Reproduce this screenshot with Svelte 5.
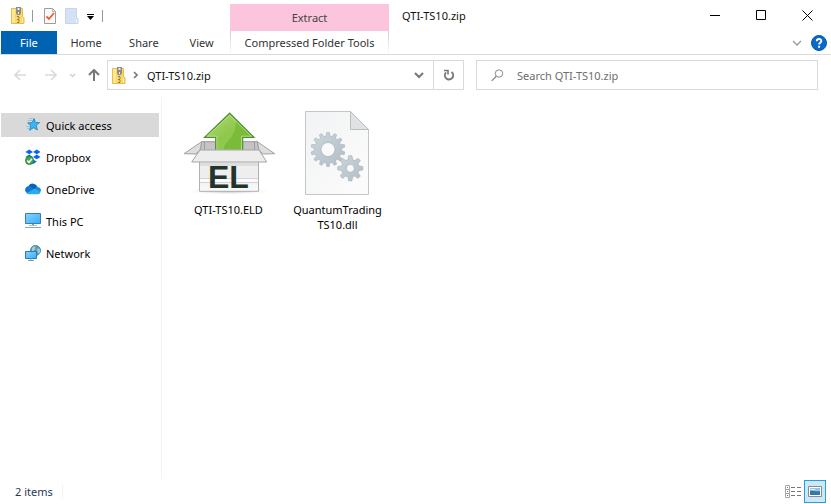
<script lang="ts">
	const archive: string = 'QTI-TS10.zip';
	const tabs: string[] = ['Home', 'Share', 'View'];
	const places: { name: string; icon: string }[] = [
		{ name: 'Quick access', icon: 'star' },
		{ name: 'Dropbox', icon: 'dropbox' },
		{ name: 'OneDrive', icon: 'cloud' },
		{ name: 'This PC', icon: 'pc' },
		{ name: 'Network', icon: 'network' }
	];

	let active: string = $state('Quick access');
	let query: string = $state('');

	function gear(cx: number, cy: number, outer: number, inner: number, teeth: number) {
		const points: string[] = [];
		const step = (Math.PI * 2) / teeth;
		for (let i = 0; i < teeth; i++) {
			const a = i * step - Math.PI / 2;
			for (const [offset, r] of [
				[-0.32, inner],
				[-0.17, outer],
				[0.17, outer],
				[0.32, inner]
			]) {
				const t = a + offset * step;
				points.push(`${(cx + r * Math.cos(t)).toFixed(2)},${(cy + r * Math.sin(t)).toFixed(2)}`);
			}
		}
		return points.join(' ');
	}
</script>

{#snippet zip()}
	<svg width="14" height="17" viewBox="0 0 14 17" aria-hidden="true">
		<path d="M.5 1.5h11v9h1.5v6H.5z" fill="#fbd968" stroke="#e9bd45" />
		<path d="M1 2h3v14H1z" fill="#ffe797" />
		<path d="M11.5 10.5v5" stroke="#fff0b4" />
		<path d="M5 0h5v6L9 8H6L5 6z" fill="#8b8b8b" />
		<path d="M6.5 1h2v2h-2zM7 5h1v2H7z" fill="#eee" />
		<path d="M6 9.500h2M7 11h2M6 12.500h2M7 14h2M6 15.500h2" stroke="#8b7d50" />
	</svg>
{/snippet}

{#snippet monitor()}
	<path d="M.5.5h15v10H.5z" fill="url(#screen)" stroke="#3a7fa9" />
	<path d="M7 11h2v1H7z" fill="#7696ab" />
	<path d="M4 12.500h8" stroke="#b0c1cc" />
{/snippet}

<div class="window">
	<header>
		<div class="quickbar">
			{@render zip()}
			<i></i>
			<button aria-label="Properties">
				<svg width="13" height="16" viewBox="0 0 13 16">
					<path d="M.5.500h8l3 3v12H.5z" fill="#fafafa" stroke="#9c9c9c" />
					<path d="M8.500.500v3h3" fill="none" stroke="#b5b5b5" />
					<path d="M2.500 8.500 5 11l5-6" fill="none" stroke="#ef5b24" stroke-width="1.800" />
				</svg>
			</button>
			<button aria-label="New folder">
				<svg width="14" height="16" viewBox="0 0 14 16">
					<path d="M.5.5h11v10H13v5H.5z" fill="#d5e2f4" stroke="#c4d6ef" />
					<path d="M11.500 11v4" stroke="#f1f6fd" />
				</svg>
			</button>
			<button class="more" aria-label="Customize Quick Access Toolbar">
				<svg width="7" height="6" viewBox="0 0 7 6"><path d="M0 0h7v1H0zM0 2h7L3.500 6z" /></svg>
			</button>
			<i></i>
		</div>
		<div class="extract">Extract</div>
		<div class="titlebar">
			<h1>{archive}</h1>
			<div class="controls">
				<button aria-label="Minimize">
					<svg width="11" height="11" viewBox="0 0 11 11"><path d="M0 5.500h10" /></svg>
				</button>
				<button aria-label="Maximize">
					<svg width="11" height="11" viewBox="0 0 11 11"><path d="M.5.5h9v9h-9z" /></svg>
				</button>
				<button aria-label="Close">
					<svg width="11" height="11" viewBox="0 0 11 11"><path d="m.5.5 10 10m0-10-10 10" /></svg>
				</button>
			</div>
		</div>
		<nav class="tabs" aria-label="Ribbon">
			<button class="file">File</button>
			{#each tabs as tab}
				<button>{tab}</button>
			{/each}
		</nav>
		<button class="tools">Compressed Folder Tools</button>
		<div class="help">
			<button aria-label="Expand the Ribbon">
				<svg width="10" height="6" viewBox="0 0 10 6">
					<path d="m1 1 4 4 4-4" fill="none" stroke="#999" stroke-width="1.300" />
				</svg>
			</button>
			<button aria-label="Help">
				<svg width="16" height="16" viewBox="0 0 16 16">
					<circle cx="8" cy="8" r="7.500" fill="#0869ca" stroke="#0756a6" />
					<path
						d="M5.800 6.200C5.800 3.300 10.300 3.400 10.300 6c0 1.800-2.200 1.700-2.200 3.600M8.100 10.800v2"
						fill="none"
						stroke="#fff"
						stroke-width="1.900"
					/>
				</svg>
			</button>
		</div>
	</header>

	<div class="bar">
		<div class="history">
			<button aria-label="Back" disabled>
				<svg width="13" height="12" viewBox="0 0 13 12">
					<path d="M6 1 1 6l5 5M1 6h11" fill="none" stroke="#dadada" stroke-width="1.600" />
				</svg>
			</button>
			<button aria-label="Forward" disabled>
				<svg width="13" height="12" viewBox="0 0 13 12">
					<path d="m7 1 5 5-5 5m5-5H1" fill="none" stroke="#dadada" stroke-width="1.600" />
				</svg>
			</button>
			<button class="recent" aria-label="Recent locations" disabled>
				<svg width="7" height="5" viewBox="0 0 7 5">
					<path d="m1 1 2.500 2.500L6 1" fill="none" stroke="#cfcfcf" stroke-width="1.300" />
				</svg>
			</button>
			<button aria-label="Up">
				<svg width="12" height="12" viewBox="0 0 12 12">
					<path d="m1 6 5-5 5 5M6 1v11" fill="none" stroke="#777" stroke-width="2" />
				</svg>
			</button>
		</div>
		<div class="address">
			{@render zip()}
			<svg class="chevron" width="5" height="8" viewBox="0 0 5 8" aria-hidden="true">
				<path d="m1 1 3 3-3 3" fill="none" stroke="#777" stroke-width="1.600" />
			</svg>
			<a href="#archive">{archive}</a>
			<button aria-label="Previous locations">
				<svg width="10" height="7" viewBox="0 0 10 7">
					<path d="m1 1 4 4 4-4" fill="none" stroke="#777" stroke-width="2" />
				</svg>
			</button>
			<button class="refresh" aria-label="Refresh">
				<svg width="12" height="12" viewBox="0 0 12 12">
					<path d="M8.500 2.900A4.200 4.200 0 1 1 3 3.400" fill="none" stroke="#777" stroke-width="1.800" />
					<path d="M1 1.500h4v4" fill="none" stroke="#777" stroke-width="1.600" />
				</svg>
			</button>
		</div>
		<label class="search">
			<svg width="13" height="13" viewBox="0 0 13 13" aria-hidden="true">
				<circle cx="8" cy="4.500" r="3.700" fill="none" stroke="#888" />
				<path d="M5.300 7.200.7 11.900" stroke="#888" stroke-width="1.300" />
			</svg>
			<input type="text" aria-label="Search" placeholder="Search {archive}" bind:value={query} />
		</label>
	</div>

	<main>
		<nav class="sidebar" aria-label="Places">
			{#each places as place}
				<button class:active={active === place.name} onclick={() => (active = place.name)}>
					<svg width="16" height="16" viewBox="0 0 16 16" aria-hidden="true">
						{#if place.icon === 'star'}
							<path
								d="m9.200 1.500 1.200 4 4.200.1-3.300 2.700 1 4.700-3.700-2.300-4 2.600 1.200-4.700-3.200-2.700 4.300-.3z"
								fill="#3cb5f2"
								stroke="#1d83ba"
								stroke-width=".8"
							/>
							<path d="M3 3.500h4M1 9.500h4M2 11.500h3M4 1.500h4" stroke="#84b9db" stroke-width=".8" />
						{:else if place.icon === 'dropbox'}
							<path
								d="m4.200.5 3.800 2.400-3.800 2.400L.5 2.900zm7.600 0 3.700 2.400-3.700 2.400L8 2.900zm-7.600 5L8 7.900l-3.800 2.400L.5 7.900zm7.600 0 3.700 2.400-3.700 2.400L8 7.900zM8 10.300l3.800 2.400L8 15.100l-3.800-2.400z"
								fill="#0b63f6"
							/>
							<circle cx="4.500" cy="11.500" r="4" fill="#45a94e" stroke="#2f883a" />
							<path d="m2.300 11.600 1.700 1.700 3-3.500" fill="none" stroke="#fff" stroke-width="1.500" />
						{:else if place.icon === 'cloud'}
							<path d="M3.500 5A5 5 0 0 1 12.500 6L9 9z" fill="#0363b8" />
							<path d="M4 12.500A3.700 3.700 0 1 1 5.500 5.500L11 9z" fill="#0879d4" />
							<path d="M9.500 8 12 6a3.300 3.300 0 0 1 3 5.500z" fill="#168bdf" />
							<path d="M1.500 12 9.500 7.800l6 3.500c-.5 1.300-1.300 1.900-2.500 1.900H4c-1 0-2-.4-2.500-1.200z" fill="#2daaf0" />
						{:else if place.icon === 'pc'}
							{@render monitor()}
							<path d="M0 14.500h16" stroke="#8ca5b7" />
						{:else}
							<circle cx="10.500" cy="5.500" r="5" fill="#5b9db8" stroke="#4689aa" />
							<path d="M7 3c3-3 4-1 3 1S8 6 7 7zM12 4c2-1 3 0 3 2s-1 3-2 2z" fill="#a5cdd2" />
							<path d="M.5 6.500h11v7H.5z" fill="url(#screen)" stroke="#287aac" />
							<path d="M5 14h2M3 15.500h6" stroke="#7b9db3" />
						{/if}
					</svg>
					{place.name}
				</button>
			{/each}
		</nav>

		<section class="files" aria-label="Files">
			<button class="item">
				<svg width="92" height="85" viewBox="0 0 92 85" aria-hidden="true">
					<defs>
						<linearGradient id="screen" x2="1" y2="1">
							<stop stop-color="#8bd3ff" />
							<stop offset="1" stop-color="#35aef8" />
						</linearGradient>
						<linearGradient id="arrow" x2="1" y2="1">
							<stop stop-color="#b5da7c" />
							<stop offset=".5" stop-color="#8fc84c" />
							<stop offset="1" stop-color="#8ecb50" />
						</linearGradient>
						<linearGradient id="card" x2="0" y2="1">
							<stop stop-color="#f0f0f0" />
							<stop offset=".55" stop-color="#eee" />
							<stop offset="1" stop-color="#fafafa" />
						</linearGradient>
						<radialGradient id="shadow">
							<stop stop-color="#aaa" />
							<stop offset="1" stop-color="#fff" stop-opacity="0" />
						</radialGradient>
					</defs>
					<ellipse cx="46" cy="80" rx="45" ry="4" fill="url(#shadow)" />
					<path d="M18.700 30.700h55.600L76 40H17z" fill="#c4c4c6" stroke="#98989a" />
					<path d="M21.500 31v9M71.500 31v9" stroke="#9d9da0" />
					<path
						d="M46.700 2.200 71 26.300H59.700V40h-27V26.300H21.500z"
						fill="url(#arrow)"
						stroke="#4f8e36"
						stroke-width="1.200"
					/>
					<path d="M53 10 69 25.700H59V39H41c-1-9 12-10 12-29z" fill="#6fb32e" opacity=".65" />
					<path
						d="M46.700 4.200 68.300 25.200H58.500V39H33.900V25.200H24.300z"
						fill="none"
						stroke="#c3e79a"
						stroke-opacity=".7"
					/>
					<path
						d="M18.700 30.700 1 42.700l12 .3 4-4.300zM74.300 30.700l17.400 12-12 .3-3.700-4.300z"
						fill="#dedee0"
						stroke="#a2a2a4"
					/>
					<path d="M16.500 50h59v30.300h-59z" fill="url(#card)" stroke="#b0b0b2" />
					<path d="M17 67.500h58M17 71.500h58" stroke="#d5d5d7" />
					<path d="M17 69.500h58" stroke="#fff" stroke-width="2" />
					<path d="M17 39h59l7.700 12H8.700z" fill="#ededee" stroke="#a5a5a7" />
					<path d="M17 52h58v3H17z" fill="#c8c8c8" opacity=".45" />
					<text x="25" y="77">EL</text>
				</svg>
				<span>QTI-TS10.ELD</span>
			</button>
			<button class="item">
				<svg width="65" height="85" viewBox="0 0 65 85" aria-hidden="true">
					<defs>
						<linearGradient id="paper" x2="1" y2="1">
							<stop stop-color="#f2f3f4" />
							<stop offset="1" stop-color="#fcfcfc" />
						</linearGradient>
						<linearGradient id="metal" x2="1" y2="1">
							<stop stop-color="#ccd5dc" />
							<stop offset="1" stop-color="#b3bdc4" />
						</linearGradient>
					</defs>
					<path d="M.5.500h45l18 18v65H.5z" fill="url(#paper)" stroke="#c3c6c8" />
					<path d="M45.500.500v18h18z" fill="#e1e2e3" stroke="#bbbec0" />
					<g fill="url(#metal)" stroke="#a4b0b8" stroke-width=".6">
						<polygon points={gear(23, 38.5, 17, 13.5, 14)} />
						<polygon points={gear(45.3, 57.3, 12.7, 9, 8)} />
					</g>
					<g fill="#fafafa" stroke="#a4b0b8" stroke-width=".7">
						<circle cx="23" cy="38.500" r="7" />
						<circle cx="45.300" cy="57.300" r="4" />
					</g>
				</svg>
				<span>QuantumTrading TS10.dll</span>
			</button>
		</section>
	</main>

	<footer>
		<span>2 items</span>
		<div class="views">
			<button aria-label="Details">
				<svg width="17" height="13" viewBox="0 0 17 13">
					<path d="M.5.500h4v12h-4zM.5 4.500h4M.5 8.500h4" fill="none" stroke="#a5a5a5" />
					<path d="M6 2.500h4m2 0h4M6 6.500h4m2 0h4M6 10.500h4m2 0h4" stroke="#777" />
					<path d="M2 2h1v1H2z" fill="#527d9b" />
					<path d="M2 6h1v1H2z" fill="#3888e8" />
					<path d="M2 10h1v1H2z" fill="#d02b3f" />
				</svg>
			</button>
			<button class="active" aria-label="Large icons">
				<svg width="14" height="11" viewBox="0 0 14 11">
					<path d="M.5.500h13v10H.5z" fill="#fff" stroke="#8a8a8a" />
					<path d="M2 2h10v7H2z" fill="#8cc5ef" />
					<path d="M2 5c3-1 5 1 10 0v2H2z" fill="#3c7b82" />
					<path d="M2 7h10v2H2z" fill="#3474b8" />
					<path d="M2 4h4l2-1H3z" fill="#e9f6fd" />
				</svg>
			</button>
		</div>
	</footer>
</div>

<style>
	:global(body) {
		margin: 0;
	}

	.window {
		display: flex;
		flex-direction: column;
		min-height: 100vh;
		background: #fff;
		color: #111;
		font-family: 'Noto Sans', 'Open Sans', sans-serif;
		font-size: 11px;
		line-height: 15px;
	}

	svg {
		display: block;
		flex: none;
	}

	button {
		display: flex;
		align-items: center;
		justify-content: center;
		padding: 0;
		border: 0;
		background: none;
		color: inherit;
		font: inherit;
	}

	header {
		display: grid;
		grid-template-columns: 230px 159px 1fr;
		grid-template-rows: 31px 23px;
		border-bottom: 1px solid #dadbdc;
	}

	.quickbar {
		display: flex;
		align-items: center;
		gap: 8px;
		padding-left: 11px;
	}

	.quickbar i {
		width: 1px;
		height: 12px;
		background: #999;
	}

	.quickbar i:first-of-type {
		margin-left: -1px;
	}

	.quickbar i + button {
		margin-left: 3px;
	}

	.more {
		padding-top: 2px;
	}

	.extract {
		display: flex;
		align-items: center;
		justify-content: center;
		margin-top: 4px;
		background: #fdc5dd;
		color: #444;
	}

	.titlebar {
		display: flex;
		justify-content: space-between;
		align-items: center;
		padding: 0 1px 0 13px;
	}

	h1 {
		margin: 0;
		font-size: 11px;
		font-weight: 400;
	}

	.controls {
		display: flex;
		align-self: stretch;
	}

	.controls button {
		width: 46px;
	}

	.controls path {
		fill: none;
		stroke: #000;
	}

	.tabs {
		display: flex;
		padding-left: 1px;
		gap: 1px;
		color: #333;
	}

	.tabs button {
		width: 57px;
	}

	.tabs .file {
		width: 56px;
		background: #0063b1;
		color: #fff;
	}

	.tools {
		border: solid;
		border-width: 0 1px;
		border-image: linear-gradient(#ccc, #fff) 1;
		color: #333;
		white-space: nowrap;
	}

	.help {
		display: flex;
		align-items: center;
		justify-content: flex-end;
		gap: 9px;
		padding-right: 4px;
	}

	.bar {
		display: flex;
		gap: 12px;
		padding: 5px 13px 7px 0;
	}

	.history {
		display: flex;
		align-items: center;
		gap: 17px;
		margin-right: -5px;
		padding-left: 14px;
	}

	.history .recent {
		margin: 0 -5px 0 -5px;
	}

	.history .recent + button {
		margin-left: 0;
	}

	.address,
	.search {
		display: flex;
		align-items: center;
		box-sizing: border-box;
		height: 30px;
		border: 1px solid #d9d9d9;
	}

	.address {
		flex: 351 1 0;
		padding-left: 4px;
	}

	.chevron {
		margin: 0 9px 0 7px;
	}

	.address a {
		flex: 1;
		color: #111;
		text-decoration: none;
	}

	.address button {
		align-self: stretch;
		width: 29px;
	}

	.address .refresh {
		width: 30px;
		border-left: 1px solid #d9d9d9;
	}

	.search {
		flex: 326 1 0;
		gap: 13px;
		padding-left: 14px;
	}

	.search input {
		flex: 1;
		min-width: 0;
		padding: 0;
		border: 0;
		outline: 0;
		background: none;
		color: #111;
		font: inherit;
	}

	.search input::placeholder {
		color: #6d6d6d;
		opacity: 1;
	}

	main {
		display: flex;
		flex: 1;
	}

	.sidebar {
		display: flex;
		flex-direction: column;
		gap: 8px;
		width: 158px;
		padding: 16px 2px 16px 1px;
		border-right: 1px solid #f3f3f3;
	}

	.sidebar button {
		justify-content: flex-start;
		gap: 5px;
		height: 24px;
		padding-left: 24px;
		color: #000;
	}

	.sidebar .active {
		background: #d9d9d9;
	}

	.files {
		display: flex;
		flex: 1;
		flex-wrap: wrap;
		align-content: flex-start;
		padding: 14px 12px;
	}

	.item {
		flex-direction: column;
		justify-content: flex-start;
		gap: 6px;
		width: 109px;
		color: #000;
	}

	.item text {
		fill: #24332b;
		font: bold 32px 'Liberation Sans', sans-serif;
	}

	footer {
		display: flex;
		align-items: center;
		justify-content: space-between;
		height: 25px;
		padding: 0 5px 0 15px;
		color: #1e395b;
	}

	footer span {
		padding-right: 9px;
		border-right: 1px solid #f3f3f3;
	}

	.views {
		display: flex;
		gap: 2px;
	}

	.views .active {
		width: 22px;
		height: 23px;
		border: 1px solid #26a0da;
		background: #cce8f6;
	}
</style>
